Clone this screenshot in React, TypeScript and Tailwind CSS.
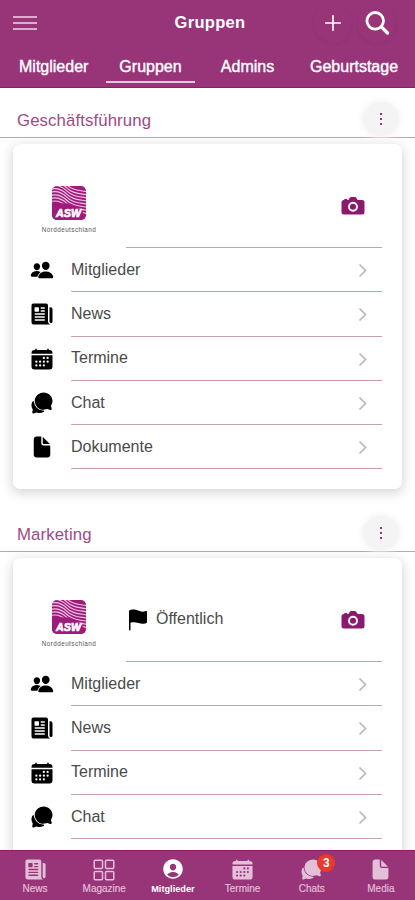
import React from 'react';
import {
  IoAdd,
  IoCalendar,
  IoChatbubbles,
  IoDocument,
  IoFlag,
  IoGridOutline,
  IoNewspaper,
  IoPeople,
  IoPersonCircle,
} from 'react-icons/io5';
import type { IconType } from 'react-icons';

type Entry = { label: string; icon: IconType };

const publicEntries: Entry[] = [
  { label: 'Mitglieder', icon: IoPeople },
  { label: 'News', icon: IoNewspaper },
  { label: 'Termine', icon: IoCalendar },
  { label: 'Chat', icon: IoChatbubbles },
];

const allEntries: Entry[] = [...publicEntries, { label: 'Dokumente', icon: IoDocument }];

function Camera() {
  return (
    <svg viewBox="0 0 24 20" className="ml-auto h-[20px] w-[24px]">
      <path
        d="M3 4h.3V3h2.9v1h1.2l1.2-1.9Q9.1 1 10.3 1h3.4q1.200 0 1.700 1.100L16.600 4H21a2.500 2.500 0 0 1 2.500 2.500v9.500A2.500 2.500 0 0 1 21 18.500H3A2.500 2.500 0 0 1 .5 16V6.500A2.500 2.500 0 0 1 3 4Z"
        fill="#8b1a6e"
      />
      <circle cx="12" cy="10.800" r="4" fill="none" stroke="#fff" strokeWidth="1.900" />
    </svg>
  );
}

function Logo() {
  return (
    <div className="flex w-[56px] flex-col items-center">
      <svg width="34" height="34" viewBox="0 0 34 34">
        <defs>
          <clipPath id="badge">
            <rect width="34" height="34" rx="5" />
          </clipPath>
        </defs>
        <g clipPath="url(#badge)">
          <rect width="34" height="34" fill="#a01a7c" />
          <g fill="none" stroke="#efc6e4" strokeWidth="1.2">
            {[0, 1, 2, 3, 4, 5, 6, 7].map((i) => (
              <path
                key={i}
                d="M-2 1 C5 -1 10 1 15 6 S26 11 36 13"
                transform={`translate(0 ${i * 3.1 - 7})`}
              />
            ))}
          </g>
          <path d="M-1 34V23C6 15 23 14 32 28L34 34Z" fill="#a01a7c" />
        </g>
        <text
          x="4"
          y="31"
          textLength="25"
          lengthAdjust="spacingAndGlyphs"
          fill="#fff"
          stroke="#fff"
          strokeWidth="0.7"
          className="font-['Liberation_Sans',sans-serif] text-[11.5px] font-bold italic"
        >
          ASW
        </text>
      </svg>
      <span className="mt-[5px] text-[6.3px] leading-[9px] tracking-[0.45px] text-[#555]">Norddeutschland</span>
    </div>
  );
}

function Group({ title, entries, isPublic }: { title: string; entries: Entry[]; isPublic?: boolean }) {
  return (
    <section className="h-[414px] shrink-0">
      <div className="flex h-[50px] items-center justify-between border-b border-[#c9a0b2] pr-[16px] pl-[17px]">
        <h2 className="pt-[16px] text-[16.8px] leading-5 tracking-[0.1px] text-[#a04a84]">{title}</h2>
        <div className="mt-[13px] flex h-[34px] w-[36px] flex-col items-center justify-center gap-[3px] rounded-full bg-[#f4f4f4] shadow-[0_0_6px_2px_#f5f5f5]">
          <i className="size-[2px] bg-[#983478]" />
          <i className="size-[2px] bg-[#983478]" />
          <i className="size-[2px] bg-[#983478]" />
        </div>
      </div>
      <div className="mx-[13px] mt-[6px] h-[345px] rounded-[7px] bg-white pr-[20px] shadow-[0_3px_12px_1px_rgba(0,0,0,0.17)]">
        <div className="flex h-[104px] pl-[28px]">
          <div className="pt-[42px]">
            <Logo />
          </div>
          <div className="ml-[29px] flex flex-1 items-center border-b border-[#c9a0b2] pt-[21px] pr-[17px]">
            {isPublic && (
              <>
                <IoFlag className="size-[24px]" />
                <span className="-mt-[2px] ml-[6px] text-[16px] leading-5 text-[#4a4a4a]">Öffentlich</span>
              </>
            )}
            <Camera />
          </div>
        </div>
        {entries.map(({ label, icon: Icon }) => (
          <div key={label} className="flex h-[44.3px] items-stretch">
            <div className="flex w-[58px] items-center pl-[17px]">
              <Icon className="size-[24px] text-black" />
            </div>
            <div className="flex flex-1 items-center justify-between border-b border-[#c9a0b2] pr-[11px]">
              <span className="text-[16px] leading-5 text-[#4a4a4a]">{label}</span>
              <svg
                viewBox="0 0 17 17"
                className="mt-[2px] size-[17px] fill-none stroke-[#b8b8b8] stroke-[1.7]"
              >
                <path d="m5.500 2.500 6 6-6 6" />
              </svg>
            </div>
          </div>
        ))}
      </div>
    </section>
  );
}

const footer: (Entry & { active?: boolean; badge?: number })[] = [
  { label: 'News', icon: IoNewspaper },
  { label: 'Magazine', icon: IoGridOutline },
  { label: 'Mitglieder', icon: IoPersonCircle, active: true },
  { label: 'Termine', icon: IoCalendar },
  { label: 'Chats', icon: IoChatbubbles, badge: 3 },
  { label: 'Media', icon: IoDocument },
];

export default function App() {
  return (
    <div className="flex h-[900px] w-[415px] flex-col overflow-hidden bg-white font-['Liberation_Sans',Arial,sans-serif]">
      <header className="flex h-[88px] shrink-0 flex-col border-b border-[#8c1c70] bg-[#983478] text-white">
        <div className="grid h-[46px] grid-cols-[1fr_auto_1fr] items-center">
          <div className="flex flex-col gap-[4px] pl-[13px]">
            <i className="h-[2px] w-[24px] bg-[#d9adcb]" />
            <i className="h-[2px] w-[24px] bg-[#d9adcb]" />
            <i className="h-[2px] w-[24px] bg-[#d9adcb]" />
          </div>
          <h1 className="-mt-[2px] pl-[5px] text-[16.5px] leading-5 font-bold tracking-[0.3px]">Gruppen</h1>
          <div className="flex items-center justify-end gap-[6px] pr-[19px]">
            <div className="flex size-[38px] items-center justify-center rounded-full shadow-[0_2px_5px_rgba(0,0,0,0.05)]">
              <IoAdd className="size-[26px]" />
            </div>
            <div className="flex size-[38px] items-center justify-center rounded-full shadow-[0_2px_5px_rgba(0,0,0,0.05)]">
              <svg viewBox="0 0 26 26" className="size-[26px] fill-none stroke-white stroke-[2.8]">
                <circle cx="11.200" cy="10.800" r="8.300" />
                <path d="m17.500 17 6 6" strokeWidth="3.2" strokeLinecap="round" />
              </svg>
            </div>
          </div>
        </div>
        <nav className="flex h-[41px] text-[16px] leading-[41px] [-webkit-text-stroke:0.4px_white]">
          <span className="w-[106px] pl-[19px]">Mitglieder</span>
          <span className="h-[37px] w-[89px] border-b-2 border-[#e6c6dc] text-center">Gruppen</span>
          <span className="w-[105px] text-center">Admins</span>
          <span className="flex-1 pl-[10px]">Geburtstage</span>
        </nav>
      </header>
      <main className="flex min-h-0 flex-1 flex-col overflow-hidden">
        <Group title="Geschäftsführung" entries={allEntries} />
        <Group title="Marketing" entries={publicEntries} isPublic />
      </main>
      <footer className="grid h-[50px] shrink-0 grid-cols-6 border-t border-[#8c1c70] bg-[#983478]">
        {footer.map(({ label, icon: Icon, active, badge }) => (
          <div
            key={label}
            className={
              active
                ? 'flex flex-col items-center pt-[6px] text-white'
                : 'flex flex-col items-center pt-[7px] pl-px text-[#e3bfd8]'
            }
          >
            <div className="relative">
              <Icon
                className={
                  label === 'Magazine'
                    ? 'size-[24px] stroke-current stroke-[14]'
                    : active
                      ? 'size-[24px]'
                      : 'size-[23px]'
                }
              />
              {badge && (
                <span className="absolute -top-[4px] left-[17px] flex size-[18px] items-center justify-center rounded-full bg-[#e8392f] text-[12px] font-bold text-white">
                  {badge}
                </span>
              )}
            </div>
            <span
              className={
                active
                  ? 'mt-auto mb-[5px] text-[9.2px] leading-3 font-bold'
                  : 'mt-auto mb-[5px] text-[10px] leading-3 [-webkit-text-stroke:0.2px_#e3bfd8]'
              }
            >
              {label}
            </span>
          </div>
        ))}
      </footer>
    </div>
  );
}
